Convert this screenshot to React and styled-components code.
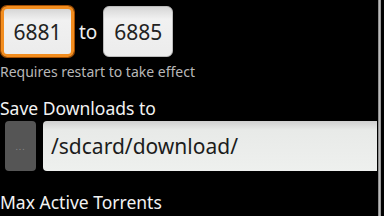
import styled, { createGlobalStyle } from "styled-components";

const GlobalStyle = createGlobalStyle`
  html, body {
    margin: 0;
    padding: 0;
    background: #000;
  }
  body {
    font-family: "Noto Sans", "Open Sans", sans-serif;
  }
`;

const Screen = styled.div`
  width: 384px;
  height: 216px;
  display: flex;
  overflow: hidden;
  background: #000;
`;

const Content = styled.div`
  flex: 1;
  display: flex;
  flex-direction: column;
`;

const Scrollbar = styled.div`
  width: 3px;
  margin: 0 3px 0 1px;
  background: linear-gradient(90deg, #777, #bbb, #888);
`;

const PortRow = styled.div`
  display: flex;
  align-items: center;
  padding-top: 6px;
`;

const PortBox = styled.div`
  box-sizing: border-box;
  width: ${(p) => p.$width}px;
  height: 51px;
  display: flex;
  align-items: center;
  justify-content: center;
  border-radius: 6px;
  font-size: 21px;
  color: #222;
  background: linear-gradient(#d6d6d6, #f1f1f1 25%, #ececec);
  border: ${(p) => (p.$focused ? "3px solid #f28d1f" : "1px solid #bbb")};
  box-shadow: ${(p) => (p.$focused ? "0 0 0 1px #a34d00" : "none")};
  margin-left: ${(p) => p.$left || 0}px;
`;

const ToLabel = styled.span`
  font-size: 19px;
  color: #eee;
  margin: 0 6px 0 5px;
`;

const Hint = styled.div`
  margin-top: 7px;
  font-size: 14px;
  line-height: 16px;
  color: #b8b8b8;
`;

const SectionTitle = styled.div`
  font-size: 17.5px;
  line-height: 22px;
  color: #f2f2f2;
  margin-top: ${(p) => p.$top}px;
`;

const PathRow = styled.div`
  display: flex;
  gap: 7px;
  padding-left: 5px;
  margin-top: 2px;
  height: 50px;
`;

const BrowseButton = styled.div`
  width: 31px;
  border-radius: 4px;
  background: #555;
  display: flex;
  align-items: center;
  justify-content: center;
  color: #8a8a8a;
  font-size: 9px;
  letter-spacing: 1px;
`;

const PathField = styled.div`
  flex: 1;
  border-radius: 4px 0 0 4px;
  background: linear-gradient(#cfcfcf, #e8eae8 18%, #eef0ee);
  display: flex;
  align-items: center;
  padding-left: 8px;
  font-size: 21px;
  color: #1c1c1c;
`;

export default function App() {
  return (
    <Screen>
      <GlobalStyle />
      <Content>
        <PortRow>
          <PortBox $focused $width={73} $left={1}>
            6881
          </PortBox>
          <ToLabel>to</ToLabel>
          <PortBox $width={70}>6885</PortBox>
        </PortRow>
        <Hint>Requires restart to take effect</Hint>
        <SectionTitle $top={17}>Save Downloads to</SectionTitle>
        <PathRow>
          <BrowseButton>...</BrowseButton>
          <PathField>/sdcard/download/</PathField>
        </PathRow>
        <SectionTitle $top={20}>Max Active Torrents</SectionTitle>
      </Content>
      <Scrollbar />
    </Screen>
  );
}
